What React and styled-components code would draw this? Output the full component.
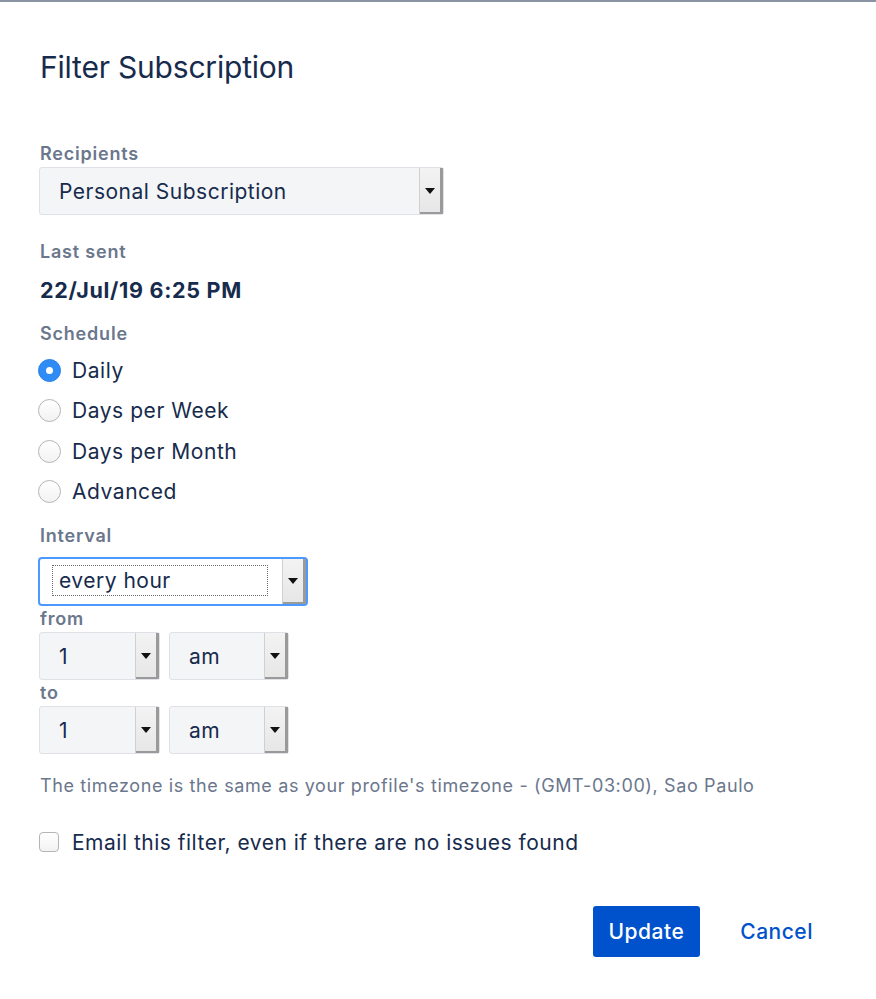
import React from "react";
import styled, { createGlobalStyle } from "styled-components";

const GlobalStyle = createGlobalStyle`
  html, body {
    margin: 0;
    padding: 0;
    background: #ffffff;
  }
  body {
    font-family: Inter, "Noto Sans", "Liberation Sans", sans-serif;
    color: #172b4d;
  }
`;

const TopEdge = styled.div`
  height: 2px;
  background-color: #8993a4;
`;

const Dialog = styled.div`
  padding: 47px 63px 40px 39px;
  background-color: #ffffff;
  border-radius: 3px 3px 0 0;
`;

const Title = styled.h1`
  margin: 0 0 58px 1px;
  font-size: 30px;
  line-height: 36px;
  font-weight: 400;
  letter-spacing: -0.2px;
  color: #172b4d;
`;

const Label = styled.div`
  margin: ${(p) => p.$top || 0}px 0 ${(p) => (p.$bottom == null ? 2 : p.$bottom)}px 1px;
  font-size: 18px;
  line-height: 22px;
  font-weight: 600;
  letter-spacing: 0.8px;
  color: #6b778c;
`;

const SelectBox = styled.div`
  display: flex;
  align-items: stretch;
  box-sizing: border-box;
  width: ${(p) => p.$width}px;
  height: ${(p) => (p.$focus ? 49 : 48)}px;
  margin-left: ${(p) => (p.$focus ? -1 : 0)}px;
  background-color: ${(p) => (p.$focus ? "#ffffff" : "#f4f5f7")};
  border: ${(p) => (p.$focus ? "2px solid #4c9aff" : "1px solid #dfe1e6")};
  border-radius: ${(p) => (p.$focus ? 4 : 3)}px;
`;

const SelectValue = styled.div`
  flex: 1;
  display: flex;
  align-items: center;
  padding-left: ${(p) => p.$pad || 19}px;
  font-size: 21px;
  letter-spacing: 0.5px;
  color: #172b4d;
`;

const FocusRing = styled.div`
  flex: 1;
  display: flex;
  align-items: center;
  margin: 6px 14px 8px 12px;
  padding-left: 6px;
  border: 1px dotted #6d6d6d;
  font-size: 21px;
  letter-spacing: 0.5px;
  color: #172b4d;
`;

const SelectArrow = styled.div`
  width: 23px;
  display: flex;
  align-items: center;
  justify-content: center;
  background: linear-gradient(#f3f3f3, #e6e6e6);
  border-left: 1px solid #d0d0d0;
  box-shadow: inset -3px -2px 0 #9a9a9a;

  &::after {
    content: "";
    margin: 0 3px 1px 0;
    border-left: 5px solid transparent;
    border-right: 5px solid transparent;
    border-top: 6px solid #111111;
  }
`;

const SelectRow = styled.div`
  display: flex;
  gap: 9px;
`;

const Value = styled.div`
  margin: 14px 0 20px 1px;
  font-size: 21.5px;
  line-height: 26px;
  font-weight: 700;
  letter-spacing: 0.7px;
  color: #172b4d;
`;

const RadioList = styled.div`
  margin: 5px 0 13px;
`;

const RadioRow = styled.label`
  display: flex;
  align-items: center;
  height: 40.5px;
  gap: 11px;
  font-size: 21px;
  letter-spacing: 0.55px;
  color: #172b4d;
`;

const Radio = styled.span`
  box-sizing: border-box;
  width: 23px;
  height: 23px;
  margin-left: -1px;
  border-radius: 50%;
  display: flex;
  align-items: center;
  justify-content: center;
  background: ${(p) => (p.$checked ? "#2f8cf5" : "linear-gradient(#ffffff, #f2f2f2)")};
  border: 1px solid ${(p) => (p.$checked ? "#2a82ea" : "#b4b4b4")};

  &::after {
    content: "";
    display: ${(p) => (p.$checked ? "block" : "none")};
    width: 7px;
    height: 7px;
    border-radius: 50%;
    background: #ffffff;
  }
`;

const Note = styled.div`
  margin: 21px 0 32px 1px;
  font-size: 18px;
  line-height: 22px;
  letter-spacing: 0.62px;
  color: #6b778c;
`;

const CheckRow = styled.label`
  display: flex;
  align-items: center;
  gap: 13px;
  height: 26px;
  font-size: 21px;
  letter-spacing: 0.5px;
  color: #172b4d;
`;

const Checkbox = styled.span`
  box-sizing: border-box;
  width: 20px;
  height: 20px;
  border: 1px solid #b4b4b4;
  border-radius: 4px;
  background: linear-gradient(#ffffff, #f2f2f2);
`;

const Actions = styled.div`
  display: flex;
  justify-content: flex-end;
  align-items: center;
  gap: 40px;
  margin-top: 51px;
`;

const Button = styled.button`
  height: 51px;
  padding: ${(p) => (p.$primary ? "0 16px" : "0")};
  border: none;
  border-radius: 3px;
  background-color: ${(p) => (p.$primary ? "#0052cc" : "transparent")};
  color: ${(p) => (p.$primary ? "#ffffff" : "#0052cc")};
  font-family: inherit;
  font-size: 21px;
  font-weight: 500;
  letter-spacing: 0.5px;
  cursor: pointer;
`;

function Select({ width, value, pad }) {
  return (
    <SelectBox $width={width}>
      <SelectValue $pad={pad}>{value}</SelectValue>
      <SelectArrow />
    </SelectBox>
  );
}

const schedules = ["Daily", "Days per Week", "Days per Month", "Advanced"];

export default function App() {
  return (
    <>
      <GlobalStyle />
      <TopEdge />
      <Dialog>
        <Title>Filter Subscription</Title>

        <Label>Recipients</Label>
        <Select width={405} value="Personal Subscription" />

        <Label $top={26} $bottom={0}>Last sent</Label>
        <Value>22/Jul/19 6:25 PM</Value>

        <Label $bottom={0}>Schedule</Label>
        <RadioList>
          {schedules.map((s, i) => (
            <RadioRow key={s}>
              <Radio $checked={i === 0} />
              {s}
            </RadioRow>
          ))}
        </RadioList>

        <Label $bottom={10}>Interval</Label>
        <SelectBox $width={270} $focus>
          <FocusRing>every hour</FocusRing>
          <SelectArrow />
        </SelectBox>

        <Label $top={2}>from</Label>
        <SelectRow>
          <Select width={121} value="1" />
          <Select width={120} value="am" />
        </SelectRow>

        <Label $top={2}>to</Label>
        <SelectRow>
          <Select width={121} value="1" />
          <Select width={120} value="am" />
        </SelectRow>

        <Note>
          The timezone is the same as your profile's timezone - (GMT-03:00), Sao Paulo
        </Note>

        <CheckRow>
          <Checkbox />
          Email this filter, even if there are no issues found
        </CheckRow>

        <Actions>
          <Button $primary>Update</Button>
          <Button>Cancel</Button>
        </Actions>
      </Dialog>
    </>
  );
}
